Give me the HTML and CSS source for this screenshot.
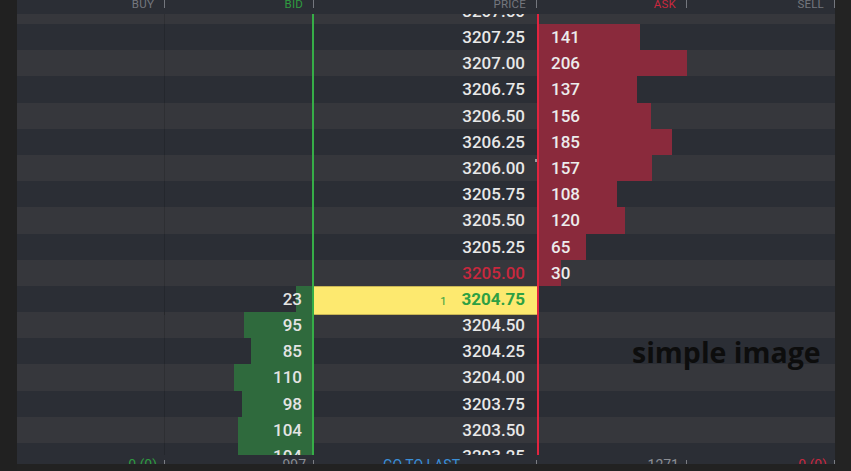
FILE: index.html
```html
<!DOCTYPE html>
<html>
<head>
<meta charset="utf-8">
<link rel="stylesheet" href="styles.css">
</head>
<body>
<div class="page">
  <div class="rail"></div>
  <div class="frame">
    <div class="cols head">
      <div class="hc"><span class="hl">BUY</span><span class="hsep"></span></div>
      <div class="hc"><span class="hl green">BID</span><span class="hsep"></span></div>
      <div class="hc"><span class="hl">PRICE</span><span class="hsep"></span></div>
      <div class="hc"><span class="hl red">ASK</span><span class="hsep"></span></div>
      <div class="hc"><span class="hl">SELL</span><span class="hsep"></span></div>
    </div>
    <div class="book">
      <div class="rows">
        <div class="cols row lt"><div class="c buy"></div><div class="c bid"></div><div class="c price"><span class="px">3207.50</span></div><div class="c ask"></div><div class="c sell"></div></div>
        <div class="cols row dk"><div class="c buy"></div><div class="c bid"></div><div class="c price"><span class="px">3207.25</span></div><div class="c ask"><span class="bar abar" style="width:68.45%"></span><span class="q">141</span></div><div class="c sell"></div></div>
        <div class="cols row lt"><div class="c buy"></div><div class="c bid"></div><div class="c price"><span class="px">3207.00</span></div><div class="c ask"><span class="bar abar" style="width:100%"></span><span class="q">206</span></div><div class="c sell"></div></div>
        <div class="cols row dk"><div class="c buy"></div><div class="c bid"></div><div class="c price"><span class="px">3206.75</span></div><div class="c ask"><span class="bar abar" style="width:66.5%"></span><span class="q">137</span></div><div class="c sell"></div></div>
        <div class="cols row lt"><div class="c buy"></div><div class="c bid"></div><div class="c price"><span class="px">3206.50</span></div><div class="c ask"><span class="bar abar" style="width:75.73%"></span><span class="q">156</span></div><div class="c sell"></div></div>
        <div class="cols row dk"><div class="c buy"></div><div class="c bid"></div><div class="c price"><span class="px">3206.25</span></div><div class="c ask"><span class="bar abar" style="width:89.81%"></span><span class="q">185</span></div><div class="c sell"></div></div>
        <div class="cols row lt"><div class="c buy"></div><div class="c bid"></div><div class="c price"><span class="px">3206.00</span><span class="tick"></span></div><div class="c ask"><span class="bar abar" style="width:76.21%"></span><span class="q">157</span></div><div class="c sell"></div></div>
        <div class="cols row dk"><div class="c buy"></div><div class="c bid"></div><div class="c price"><span class="px">3205.75</span></div><div class="c ask"><span class="bar abar" style="width:52.43%"></span><span class="q">108</span></div><div class="c sell"></div></div>
        <div class="cols row lt"><div class="c buy"></div><div class="c bid"></div><div class="c price"><span class="px">3205.50</span></div><div class="c ask"><span class="bar abar" style="width:58.25%"></span><span class="q">120</span></div><div class="c sell"></div></div>
        <div class="cols row dk"><div class="c buy"></div><div class="c bid"></div><div class="c price"><span class="px">3205.25</span></div><div class="c ask"><span class="bar abar" style="width:31.55%"></span><span class="q">65</span></div><div class="c sell"></div></div>
        <div class="cols row lt"><div class="c buy"></div><div class="c bid"></div><div class="c price"><span class="px lastask">3205.00</span></div><div class="c ask"><span class="bar abar" style="width:14.56%"></span><span class="q">30</span></div><div class="c sell"></div></div>
        <div class="cols row dk"><div class="c buy"></div><div class="c bid"><span class="bar bbar" style="width:11.17%"></span><span class="q">23</span></div><div class="c price current"><span class="vol">1</span><span class="px">3204.75</span></div><div class="c ask"></div><div class="c sell"></div></div>
        <div class="cols row lt"><div class="c buy"></div><div class="c bid"><span class="bar bbar" style="width:46.12%"></span><span class="q">95</span></div><div class="c price"><span class="px">3204.50</span></div><div class="c ask"></div><div class="c sell"></div></div>
        <div class="cols row dk"><div class="c buy"></div><div class="c bid"><span class="bar bbar" style="width:41.26%"></span><span class="q">85</span></div><div class="c price"><span class="px">3204.25</span></div><div class="c ask"></div><div class="c sell"></div></div>
        <div class="cols row lt"><div class="c buy"></div><div class="c bid"><span class="bar bbar" style="width:53.4%"></span><span class="q">110</span></div><div class="c price"><span class="px">3204.00</span></div><div class="c ask"></div><div class="c sell"></div></div>
        <div class="cols row dk"><div class="c buy"></div><div class="c bid"><span class="bar bbar" style="width:47.57%"></span><span class="q">98</span></div><div class="c price"><span class="px">3203.75</span></div><div class="c ask"></div><div class="c sell"></div></div>
        <div class="cols row lt"><div class="c buy"></div><div class="c bid"><span class="bar bbar" style="width:50.49%"></span><span class="q">104</span></div><div class="c price"><span class="px">3203.50</span></div><div class="c ask"></div><div class="c sell"></div></div>
        <div class="cols row dk"><div class="c buy"></div><div class="c bid"><span class="bar bbar" style="width:50.49%"></span><span class="q">104</span></div><div class="c price"><span class="px">3203.25</span></div><div class="c ask"></div><div class="c sell"></div></div>
      </div>
    </div>
    <div class="cols foot">
      <div class="fc"><span class="fl green">0 (0)</span><span class="fsep"></span></div>
      <div class="fc"><span class="fl">997</span><span class="fsep"></span></div>
      <div class="fc center"><span class="fl link">GO TO LAST</span><span class="fsep"></span></div>
      <div class="fc"><span class="fl">1271</span><span class="fsep"></span></div>
      <div class="fc"><span class="fl red">0 (0)</span><span class="fsep"></span></div>
    </div>
  </div>
  <div class="rail rail-r"></div>
  <div class="watermark">simple image</div>
</div>
</body>
</html>
```

FILE: styles.css
```css
* { box-sizing: border-box; }
html, body { margin: 0; padding: 0; }
body {
  background: #222222;
  overflow: hidden;
  font-family: Roboto, "Liberation Sans", sans-serif;
  color: #e6e6e6;
}
.page {
  position: relative;
  display: flex;
  height: 471px;
  width: 851px;
}
.rail { width: 17px; background: #212121; flex: none; }
.rail-r { flex: 1; background: #232323; }
.frame {
  width: 818px;
  height: 464px;
  flex: none;
  overflow: hidden;
  background: #2b2e35;
  display: flex;
  flex-direction: column;
}
.cols {
  display: grid;
  grid-template-columns: 148px 149px 223px 150px 148px;
}

/* header */
.head {
  height: 14px;
  flex: none;
  overflow: hidden;
  background: #2b2e35;
  font-size: 11.5px;
  line-height: 14px;
}
.hc {
  display: flex;
  justify-content: flex-end;
  align-items: flex-start;
  gap: 10px;
}
.hl { margin-top: -3px; color: #74777e; letter-spacing: 0.2px; }
.hsep { width: 1px; height: 8px; background: #74777e; flex: none; }
.green { color: #2f9c40 !important; }
.red { color: #c8283e !important; }

/* book */
.book {
  height: 441px;
  flex: none;
  overflow: hidden;
}
.rows { margin-top: -16.2px; }
.row {
  height: 26.2px;
  font-size: 17px;
  font-weight: 500;
  line-height: 26.2px;
}
.row.dk { background: #2b2e35; }
.row.lt { background: #36373c; }
.c {
  display: grid;
  min-width: 0;
  height: 100%;
}
.c > * { grid-area: 1 / 1; }
.buy { border-right: 1px solid rgba(0,0,0,0.14); }
.bid { border-right: 2px solid #36ad47; }
.ask { border-left: 2px solid #e1243f; }
.bar { height: 100%; }
.bbar { justify-self: end; background: #2f6a3d; }
.abar { justify-self: start; background: #8a2a3c; }
.bid .q { justify-self: end; padding-right: 10px; color: #e4e4e4; }
.ask .q { justify-self: start; padding-left: 12px; color: #ececec; }
.price {
  display: flex;
  justify-content: flex-end;
  align-items: baseline;
  padding-right: 12px;
  position: relative;
}
.px { color: #e8e8e8; }
.lastask { color: #c8283e; }
.tick {
  position: absolute;
  right: 0;
  top: 4px;
  width: 2px;
  height: 3px;
  background: #9a9ca0;
}
.current {
  background: #fde96f;
  box-shadow: inset 0 1px 0 #c9b656, inset 0 -1px 0 #c9b656;
  gap: 15px;
}
.current .px { color: #2ea043; font-weight: 700; }
.current .vol { color: #2ea043; font-size: 11px; font-weight: 400; }

/* footer */
.foot {
  height: 30px;
  flex: none;
  background: #2b2e35;
  font-size: 14px;
  line-height: 20px;
}
.fc {
  display: flex;
  justify-content: flex-end;
  align-items: flex-start;
  gap: 7px;
}
.fc.center .fl { flex: 1; text-align: center; }
.fl { color: #8a8d93; }
.link { color: #3a8fd8; }
.fsep { width: 1px; height: 10px; margin-top: 5px; background: #7a7d83; flex: none; }

/* overlay label */
.watermark {
  position: absolute;
  left: 632px;
  top: 338px;
  font-family: "Open Sans", sans-serif;
  font-weight: 700;
  font-size: 28.5px;
  line-height: 28px;
  color: #0d0d0d;
  white-space: nowrap;
}
```
